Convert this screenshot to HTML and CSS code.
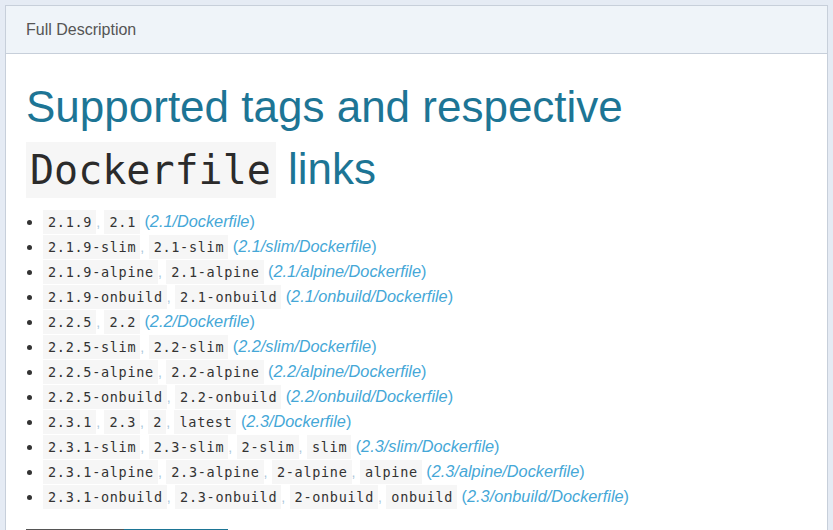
FILE: index.html
```html
<!DOCTYPE html>
<html>
<head>
<meta charset="utf-8">
<link rel="stylesheet" href="styles.css">
</head>
<body>
<div class="panel">
  <div class="panel-header">Full Description</div>
  <div class="panel-body">
    <h1 class="title">Supported tags and respective <code class="code-lg">Dockerfile</code> links</h1>
    <ul class="tags">
      <li><code>2.1.9</code><span class="sep">,</span> <code>2.1</code> <a class="link">(<em>2.1/Dockerfile</em>)</a></li>
      <li><code>2.1.9-slim</code><span class="sep">,</span> <code>2.1-slim</code> <a class="link">(<em>2.1/slim/Dockerfile</em>)</a></li>
      <li><code>2.1.9-alpine</code><span class="sep">,</span> <code>2.1-alpine</code> <a class="link">(<em>2.1/alpine/Dockerfile</em>)</a></li>
      <li><code>2.1.9-onbuild</code><span class="sep">,</span> <code>2.1-onbuild</code> <a class="link">(<em>2.1/onbuild/Dockerfile</em>)</a></li>
      <li><code>2.2.5</code><span class="sep">,</span> <code>2.2</code> <a class="link">(<em>2.2/Dockerfile</em>)</a></li>
      <li><code>2.2.5-slim</code><span class="sep">,</span> <code>2.2-slim</code> <a class="link">(<em>2.2/slim/Dockerfile</em>)</a></li>
      <li><code>2.2.5-alpine</code><span class="sep">,</span> <code>2.2-alpine</code> <a class="link">(<em>2.2/alpine/Dockerfile</em>)</a></li>
      <li><code>2.2.5-onbuild</code><span class="sep">,</span> <code>2.2-onbuild</code> <a class="link">(<em>2.2/onbuild/Dockerfile</em>)</a></li>
      <li><code>2.3.1</code><span class="sep">,</span> <code>2.3</code><span class="sep">,</span> <code>2</code><span class="sep">,</span> <code>latest</code> <a class="link">(<em>2.3/Dockerfile</em>)</a></li>
      <li><code>2.3.1-slim</code><span class="sep">,</span> <code>2.3-slim</code><span class="sep">,</span> <code>2-slim</code><span class="sep">,</span> <code>slim</code> <a class="link">(<em>2.3/slim/Dockerfile</em>)</a></li>
      <li><code>2.3.1-alpine</code><span class="sep">,</span> <code>2.3-alpine</code><span class="sep">,</span> <code>2-alpine</code><span class="sep">,</span> <code>alpine</code> <a class="link">(<em>2.3/alpine/Dockerfile</em>)</a></li>
      <li><code>2.3.1-onbuild</code><span class="sep">,</span> <code>2.3-onbuild</code><span class="sep">,</span> <code>2-onbuild</code><span class="sep">,</span> <code>onbuild</code> <a class="link">(<em>2.3/onbuild/Dockerfile</em>)</a></li>
    </ul>
    <div class="rule"><span class="rule-dark"></span><span class="rule-blue"></span></div>
  </div>
</div>
</body>
</html>
```

FILE: styles.css
```css
html, body {
  margin: 0;
  padding: 0;
}
body {
  background: #e5ebf4;
  font-family: "Liberation Sans", Arial, sans-serif;
  font-size: 16px;
  color: #333;
  padding: 5px 5px 0 5px;
  height: 525px;
  overflow: hidden;
}
.panel {
  border: 1px solid #c7cfda;
  border-bottom: none;
  background: #fff;
  height: 530px;
}
.panel-header {
  background: #eff4f9;
  border-bottom: 1px solid #c7cfda;
  height: 47px;
  line-height: 47px;
  padding: 0 20px;
  color: #555;
  font-size: 16px;
}
.panel-body {
  padding: 22px 20px 0 20px;
}
.title {
  margin: 0 0 8px 0;
  font-weight: normal;
  font-size: 44px;
  line-height: 62px;
  color: #1d7595;
}
.code-lg {
  font-family: "DejaVu Sans Mono", monospace;
  font-size: 40px;
  color: #2b2b2b;
  background: #f6f6f6;
  padding: 5px 5px 5px 4px;
}
.tags {
  margin: 0;
  padding: 0 0 0 17px;
}
.tags li {
  margin: 0;
  height: 25px;
  line-height: 25px;
}
.tags code {
  font-family: "DejaVu Sans Mono", monospace;
  font-size: 13.5px;
  line-height: 1;
  letter-spacing: 0.7px;
  color: #333;
  background: #f6f6f6;
  padding: 4px 4px 4px 5px;
}
.sep {
  color: #a9c6da;
  font-size: 14px;
}
.link {
  color: #45a7d7;
  font-size: 16.3px;
}
.link em {
  font-style: italic;
}
.rule {
  margin-top: 20px;
  display: flex;
  height: 2px;
}
.rule-dark {
  width: 98px;
  background: #555;
}
.rule-blue {
  width: 104px;
  background: #1d7595;
}
```
